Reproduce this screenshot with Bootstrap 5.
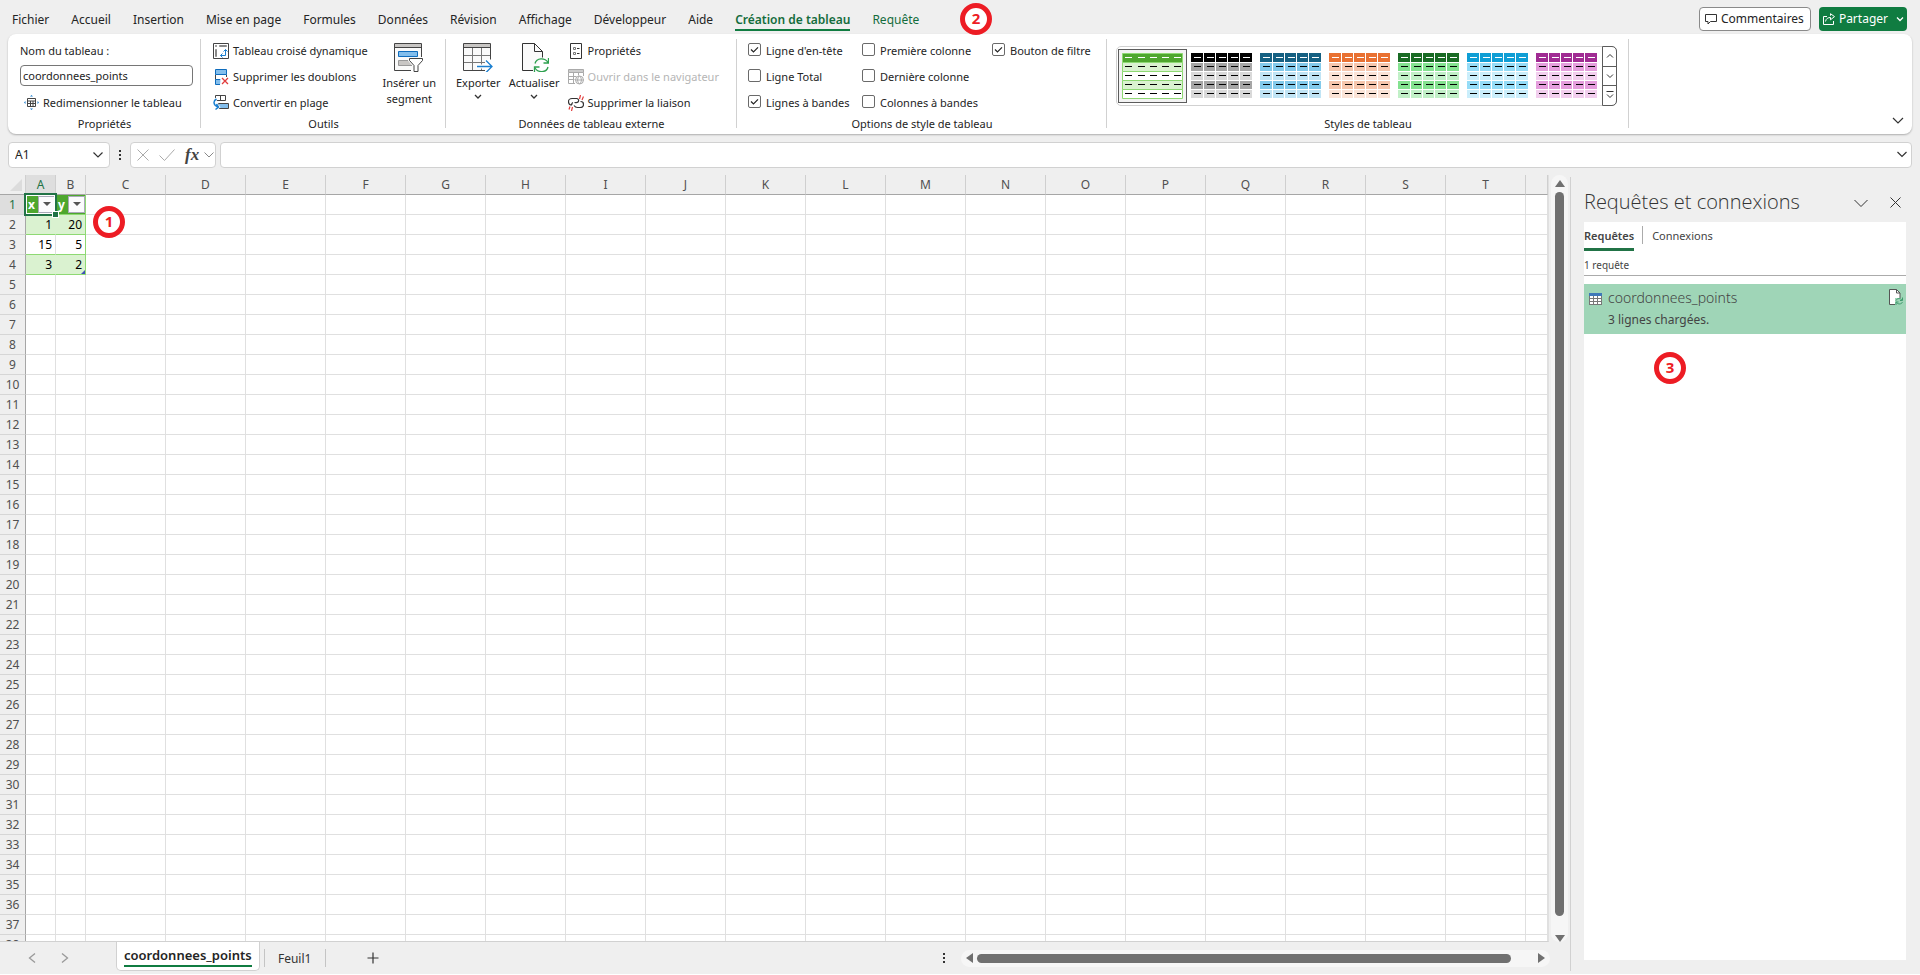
<!DOCTYPE html>
<html lang="fr">
<head>
<meta charset="utf-8">
<meta name="viewport" content="width=device-width, initial-scale=1">
<title>coordonnees_points - Excel</title>
<link href="https://cdn.jsdelivr.net/npm/bootstrap@5.3.0/dist/css/bootstrap.min.css" rel="stylesheet">
<style>
  :root { --xl-green: #107c41; --xl-dark: #217346; --xl-line: #d1d1d1; --xl-chrome: #efefef; }
  body { background: var(--xl-chrome); color: #242424; font: 12px/16px "Noto Sans", "Open Sans", sans-serif; }
  button, input { font: inherit; color: inherit; }
  button { background: none; border: 0; padding: 0; }
  svg { display: block; flex: none; }
  .app { border-bottom: 1px solid #fff; }

  /* ribbon tabs */
  .tabs-bar { height: 34px; padding: 7px 13px 0 12px; }
  .tabs-list { gap: 22px; line-height: 26px; }
  .tabs-list a { color: #242424; text-decoration: none; white-space: nowrap; }
  .tabs-list a.ctx { color: #146c3c; }
  .tabs-list a.current { font-weight: 600; border-bottom: 2px solid var(--xl-green); height: 24px; }
  .btn-top { height: 24px; border-radius: 4px; padding: 0 6px 0 5px; gap: 4px; white-space: nowrap; }
  .btn-comments { background: #fff; border: 1px solid #8a8a8a; }
  .btn-share { background: var(--xl-green); color: #fff; padding: 0 3px 0 4px; }

  /* ribbon */
  .ribbon { height: 100px; margin: 0 8px; background: #fff; border-radius: 8px; box-shadow: 0 1px 2px rgba(0,0,0,.28); font-size: 11px; }
  .rgroup { padding: 4px 0 2px; position: relative; }
  .rgroup::after { content: ""; position: absolute; right: 0; top: 5px; bottom: 6px; border-right: 1px solid var(--xl-line); }
  .rgroup-body { height: 78px; }
  .rgroup-name { height: 16px; text-align: center; }
  .stack3 { display: grid; grid-template-rows: repeat(3, 26px); align-items: center; justify-items: start; align-content: start; }
  .cmd { display: flex; align-items: center; gap: 4px; white-space: nowrap; height: 24px; }
  .cmd:disabled { color: #b5b5b5; }
  .cmd-big { display: flex; flex-direction: column; align-items: center; padding-top: 4px; gap: 3px; }
  .g-prop { width: 193px; }
  .g-tools { width: 245px; }
  .g-data { width: 291px; }
  .g-opts { width: 370px; }
  .g-styles { width: 522px; }
  .g-prop .rgroup-body { padding-left: 12px; }
  .g-tools .rgroup-body { padding: 0 10px 0 12px; }
  .g-data .rgroup-body { padding-left: 10px; }
  .g-opts .rgroup-body { padding-left: 11px; grid-template-columns: 114px 130px auto; }
  .g-styles .rgroup-body { padding: 8px 0 0 9px; }
  .name-input { width: 173px; height: 21px; border: 1px solid #767676; border-radius: 4px; padding: 0 2px; margin-bottom: 2px; }
  .chk { display: flex; align-items: center; gap: 5px; white-space: nowrap; }
  .chk .form-check-input { width: 13px; height: 13px; margin: -2px 0 0; border: 1px solid #6a6a6a; border-radius: 2px; background-color: #fff; box-shadow: none; }
  .chk .form-check-input:checked { background-size: 11px; background-image: url("data:image/svg+xml,%3csvg xmlns='http://www.w3.org/2000/svg' viewBox='0 0 11 11'%3e%3cpath d='M2 5.5l2.5 2.5L9 3.3' fill='none' stroke='%23242424' stroke-width='1.2'/%3e%3c/svg%3e"); }
  .gallery { height: 60px; width: 501px; border: 1px solid var(--xl-line); border-radius: 5px; padding-left: 1px; }
  .swatch { width: 69px; height: 54px; padding: 3px; margin-top: 2px; border: 1px solid transparent; }
  .swatch.picked { border-color: #5c5c5c; background: #f3f3f3; }
  .spin { width: 15px; height: 60px; margin: -1px -1px 0 0; display: grid; grid-template-rows: 1fr 1fr 1fr; border: 1px solid #5c5c5c; border-radius: 0 5px 5px 0; }
  .spin button { display: grid; place-items: center; }
  .spin button + button { border-top: 1px solid #5c5c5c; }

  /* formula bar */
  .fbar { margin: 8px 8px 7px; height: 26px; }
  .fbox { background: #fff; border: 1px solid var(--xl-line); border-radius: 4px; height: 26px; }
  .fbox input { border: 0; background: none; outline: 0; min-width: 0; }
  .namebox { width: 102px; padding: 0 5px 0 6px; }
  .fbtns { width: 86px; padding: 0 1px 0 6px; gap: 10px; }
  .fx { font: italic 600 17px/22px "Liberation Serif", serif; color: #444; }

  /* sheet */
  .sheet-wrap { border-right: 1px solid #e0e0e0; border-bottom: 1px solid var(--xl-line); background: #fff; min-width: 0; }
  .sheet { table-layout: fixed; width: 100%; border-collapse: separate; border-spacing: 0; }
  .sheet th, .sheet td { height: 20px; padding: 1px 0 0; line-height: 18px; overflow: hidden; }
  .sheet th { background: var(--xl-chrome); color: #505050; font-weight: 400; text-align: center; }
  .sheet thead th { border-bottom: 1px solid #a6a6a6; border-right: 1px solid #cfcfcf; }
  .sheet tbody th { border-right: 1px solid #a6a6a6; border-bottom: 1px solid #d6d6d6; }
  .sheet td { border-right: 1px solid #e0e0e0; border-bottom: 1px solid #e0e0e0; text-align: right; color: #000; padding-right: 3px; }
  .sheet th.on { background: #dedede; color: #217346; }
  .sheet td.head { background: #4ea72e; color: #fff; font-weight: 700; padding: 0; border-color: #8ed973; }
  .sheet td.head span { padding: 1px 0 0 2px; }
  .sheet td.band { background: #daf2d0; border-color: #8ed973; border-right-color: #daf2d0; }
  .sheet td.plain { border-bottom-color: #8ed973; }
  .sheet td.edge { border-right-color: #8ed973; }
  .sheet td.active { overflow: visible; position: relative; }
  .sheet td.active::before { content: ""; position: absolute; inset: -2px; border: 2px solid var(--xl-dark); outline: 1px solid #fff; outline-offset: -3px; }
  .sheet td.active::after { content: ""; position: absolute; right: -3px; bottom: -3px; width: 5px; height: 5px; background: var(--xl-dark); outline: 1px solid #fff; }
  .sheet td.last { position: relative; }
  .sheet td.last::after { content: ""; position: absolute; right: 0; bottom: 0; border: 2px solid #3f51b5; border-top-color: transparent; border-left-color: transparent; }
  .filter-btn { width: 17px; height: 17px; margin-top: 1px; background: #fbfbfd; border: 1px solid #a9a9b8; display: grid; place-items: center; }
  .corner { display: flex; justify-content: flex-end; padding: 3px 3px 2px 0; }

  .vbar { width: 17px; margin: 0 2px; background: #f6f6f6; border-radius: 9px; padding: 5px 0 0; }
  .vthumb { width: 9px; border-radius: 5px; background: #707070; margin: 5px 0 19px; }
  .hbar { width: 589px; height: 17px; background: #f6f6f6; border-radius: 9px; padding: 0 5px; }
  .hthumb { height: 9px; border-radius: 5px; background: #707070; margin: 0 27px 0 4px; }

  /* sheet tabs */
  .sheets-bar { height: 32px; padding-right: 20px; }
  .sheet-nav { width: 116px; padding-left: 28px; gap: 25px; }
  .sheet-tab { height: 30px; padding: 4px 7px 0; background: #fff; border: 1px solid var(--xl-line); border-top: 0; border-radius: 0 0 5px 5px; margin-top: -1px; }
  .sheet-tab a { border-bottom: 2px solid var(--xl-green); font-size: 13px; line-height: 20px; color: #242424; font-weight: 600; text-decoration: none; display: block; }
  .sheet-tab2 { border-left: 1px solid #c4c4c4; border-right: 1px solid #c4c4c4; margin: 7px 0 0 4px; width: 62px; height: 18px; line-height: 20px; text-align: center; color: #333; text-decoration: none; }
  .sheet-add { margin-left: 41px; }

  /* queries pane */
  .qpane { width: 350px; margin: 2px 0 3px; border-left: 1px solid var(--xl-line); padding: 0 14px 11px 13px; }
  .qtitle { font: 300 20px/28px "Open Sans", "Noto Sans", sans-serif; height: 45px; padding-top: 11px; color: #333; }
  .qtools { gap: 22px; padding: 0 5px 4px 0; }
  .qtabs { height: 29px; padding-top: 4px; }
  .qtabs a { color: #444; text-decoration: none; line-height: 20px; font-size: 11px; }
  .qtabs a.current { font-weight: 600; border-bottom: 3px solid var(--xl-dark); height: 25px; }
  .qsep { border-left: 1px solid #ababab; height: 18px; margin: 0 9px 0 8px; }
  .qcount { font-size: 10px; line-height: 20px; height: 25px; padding-top: 4px; border-bottom: 1px solid #ababab; color: #444; }
  .qitem { background: #9fd5b7; height: 50px; margin-top: 8px; padding: 5px 3px 0 5px; gap: 6px; color: #444; }
  .qname { font-size: 14px; line-height: 18px; font-weight: 300; }
  .qinfo { line-height: 26px; }

  /* numbered callouts drawn over the window */
  .callout-no { position: absolute; width: 32px; height: 32px; border: 5px solid #ed1c24; border-radius: 50%; background: #fff; color: #ed1c24; font-weight: 700; font-size: 15px; line-height: 21px; text-align: center; z-index: 3; }
  .no-1 { left: 93px; top: 31px; }
  .no-2 { left: 50%; top: 3px; }
  .no-3 { left: 70px; top: 130px; }
</style>
</head>
<body>
<div class="app vh-100 d-flex flex-column overflow-hidden">

  <header class="tabs-bar d-flex justify-content-between position-relative">
    <nav class="tabs-list d-flex" aria-label="Onglets du ruban">
      <a href="#">Fichier</a><a href="#">Accueil</a><a href="#">Insertion</a><a href="#">Mise en page</a><a href="#">Formules</a><a href="#">Données</a><a href="#">Révision</a><a href="#">Affichage</a><a href="#">Développeur</a><a href="#">Aide</a><a href="#" class="ctx current">Création de tableau</a><a href="#" class="ctx">Requête</a>
    </nav>
    <span class="callout-no no-2">2</span>
    <div class="d-flex gap-2">
      <button class="btn-top btn-comments d-flex align-items-center"><svg width="12" height="12" viewBox="0 0 12 12" fill="none" stroke="#333"><path d="M.5 1.500h11v7H5.500L3 11V8.500H.5z"/></svg>Commentaires</button>
      <button class="btn-top btn-share d-flex align-items-center"><svg width="12" height="12" viewBox="0 0 12 12" fill="none" stroke="#fff"><path d="M4 3.500H.5v8h10V8M2.500 8.500C3 5.500 5 4.500 7.500 4.500V6.800L11.500 3.600 7.500.7v2"/></svg>Partager<svg class="ms-1" width="8" height="6" viewBox="0 0 8 6" fill="none" stroke="#fff" stroke-width="1.300"><path d="M1 1.500l3 3 3-3"/></svg></button>
    </div>
  </header>

  <section class="ribbon d-flex flex-shrink-0" aria-label="Création de tableau">
    <div class="rgroup g-prop">
      <div class="rgroup-body stack3">
        <label for="tname">Nom du tableau :</label>
        <input id="tname" class="name-input" value="coordonnees_points">
        <button class="cmd ms-1"><svg width="15" height="15" viewBox="0 0 15 15" fill="none" stroke="#444"><path d="M3.500 3.500h8v8h-8zM3.500 6h8M3.500 8.500h8M6.500 6v5.500M9 6v5.500"/><path d="M6 1.500L7.500 0 9 1.500zM6 13.500L7.500 15 9 13.500zM1.500 6L0 7.500 1.500 9zM13.500 6L15 7.500 13.500 9z" fill="#1b7fd0" stroke="none"/></svg>Redimensionner le tableau</button>
      </div>
      <div class="rgroup-name">Propriétés</div>
    </div>

    <div class="rgroup g-tools">
      <div class="rgroup-body d-flex">
        <div class="stack3 flex-fill">
          <button class="cmd"><svg width="16" height="16" viewBox="0 0 16 16" fill="none" stroke="#444"><path d="M.5.500h15v15H.5z"/><path d="M2.500 2.500h1v1h-1zM6.500 2.500h7v1h-7zM2.500 6.500h1v7h-1z" fill="#c8c6c4" stroke="#888"/><path d="M7.500 12.500h5v-6M9.500 10.500l-2 2 2 2M10.500 8.500l2-2 2 2" stroke="#1b7fd0"/></svg>Tableau croisé dynamique</button>
          <button class="cmd"><svg width="16" height="16" viewBox="0 0 16 16" fill="none"><path d="M2.500 5.500v5h11v-5" fill="#fff" stroke="#444"/><path d="M2.500.500h11v5h-11z" fill="#83beec" stroke="#0f6cbd"/><path d="M8 10.500H2.500v5H7" fill="#83beec" stroke="#0f6cbd"/><path d="M7 8h9v8H8z" fill="#fff"/><path d="M9 9l6 6M15 9l-6 6" stroke="#e03c3c" stroke-width="1.300"/></svg>Supprimer les doublons</button>
          <button class="cmd"><svg width="16" height="16" viewBox="0 0 16 16" fill="none" stroke="#444"><path d="M2.500.500h10v5h-10zM7.500.500v5"/><path d="M5.500 8.500h10v5h-10z" fill="#83beec"/><path d="M3.500 4C0 6 0 10 5 12M2.500 14.500l3-2.500-2-3" stroke="#fff" stroke-width="3"/><path d="M3.500 4C0 6 0 10 5 12M2.500 14.500l3-2.500-2-3" stroke="#1b7fd0" stroke-width="1.500"/></svg>Convertir en plage</button>
        </div>
        <button class="cmd-big align-self-start"><svg width="30" height="30" viewBox="0 0 30 30" fill="none" stroke="#444"><path d="M17 28.500H.5v-27h27V15" fill="#fafafa"/><path d="M1 2h26v3.500H1z" fill="#c8c6c4" stroke="none"/><path d="M.5 5.500h27"/><path d="M4.500 9.500h19v5h-19z" fill="#83beec" stroke="#0f6cbd"/><path d="M14 18.500H4.500v5H18" fill="#c8c6c4" stroke="#999"/><path d="M15.500 16.500h13v2L24 23.500v6h-4v-6l-4.500-5z" fill="#fff"/></svg><span>Insérer un<br>segment</span></button>
      </div>
      <div class="rgroup-name">Outils</div>
    </div>

    <div class="rgroup g-data">
      <div class="rgroup-body d-flex">
        <button class="cmd-big align-self-start"><svg width="30" height="30" viewBox="0 0 30 30" fill="none"><path d="M.5 1.500h27v27H.5z" fill="#fafafa"/><path d="M1 2h26v3H1z" fill="#c8c6c4"/><path d="M.5 13.500h27M.5 20.500h27M9.500 5.500v23M18.500 5.500v23" stroke="#777"/><path d="M.5 5.500h27M.5 1.500h27v27H.5z" stroke="#444"/><path d="M13 22.500h9v-5h8v13h-8v-4h-9z" fill="#fff"/><path d="M14 24.500h15M23 18.500l6 6-6 6" stroke="#1b7fd0" stroke-width="1.300"/></svg><span>Exporter</span><svg width="8" height="6" viewBox="0 0 8 6" fill="none" stroke="#333" stroke-width="1.300"><path d="M1 1l3 3 3-3"/></svg></button>
        <button class="cmd-big align-self-start ms-2"><svg width="30" height="30" viewBox="0 0 30 30" fill="none" stroke="#333"><path d="M14 28.500H3.500v-27h12l8 8v6" fill="#fafafa"/><path d="M15.500 1.500v8h8"/><path d="M16 21.500c1.500-6 10-6 13-1M29.500 16v5h-5M29 25c-1.500 6-10 6-13 1M15.500 30v-5h5" stroke="#2ea04f" stroke-width="1.300"/></svg><span>Actualiser</span><svg width="8" height="6" viewBox="0 0 8 6" fill="none" stroke="#333" stroke-width="1.300"><path d="M1 1l3 3 3-3"/></svg></button>
        <div class="stack3 ms-2">
          <button class="cmd"><svg width="16" height="16" viewBox="0 0 16 16" fill="none" stroke="#333"><path d="M2.500.500h11v15h-11z"/><path d="M5.500 4.500h2v2h-2zM5.500 9.500h2v2h-2z" stroke="#777"/><path d="M9 5.500h2.500M9 10.500h2.500"/></svg>Propriétés</button>
          <button class="cmd" disabled><svg width="16" height="16" viewBox="0 0 16 16" fill="none" stroke="#aaa"><path d="M.5.500h15v3H.5z" fill="#ccc"/><path d="M7 14.500H.5V3.500M15.500 3.500V7M.5 7.500h8M.5 10.500h6M5.500 3.500v11M10.500 3.500v3"/><circle cx="11.500" cy="11" r="4"/><path d="M7.500 11h8M11.500 7c-2.500 2-2.500 6 0 8 2.500-2 2.500-6 0-8"/></svg>Ouvrir dans le navigateur</button>
          <button class="cmd"><svg width="16" height="16" viewBox="0 0 16 16" fill="none" stroke="#333" stroke-width="1.200"><path d="M4 10C1 10 .5 8 .5 6.500S2 3.500 4 3.500h5M6 10.500c1 1.500 2 2 3.500 2H12c2 0 3.500-1.200 3.500-3 0-1.500-.5-3-3-3M9 3.500c2 .5 2 2.500 1 3.500s-2 .5-3.500.5M4 10c-.5-1 0-2 1-2.500"/><path d="M11.500 4l1-4M14 5l1.500-3.500M4.500 12l-1 4M2 11.500L1 14.500" stroke="#e03c3c"/></svg>Supprimer la liaison</button>
        </div>
      </div>
      <div class="rgroup-name">Données de tableau externe</div>
    </div>

    <div class="rgroup g-opts">
      <div class="rgroup-body stack3">
        <label class="chk"><input type="checkbox" class="form-check-input" checked>Ligne d'en-tête</label>
        <label class="chk"><input type="checkbox" class="form-check-input">Première colonne</label>
        <label class="chk"><input type="checkbox" class="form-check-input" checked>Bouton de filtre</label>
        <label class="chk"><input type="checkbox" class="form-check-input">Ligne Total</label>
        <label class="chk"><input type="checkbox" class="form-check-input">Dernière colonne</label>
        <span></span>
        <label class="chk"><input type="checkbox" class="form-check-input" checked>Lignes à bandes</label>
        <label class="chk"><input type="checkbox" class="form-check-input">Colonnes à bandes</label>
      </div>
      <div class="rgroup-name">Options de style de tableau</div>
    </div>

    <div class="rgroup g-styles">
      <div class="rgroup-body">
        <div class="gallery d-flex justify-content-between">
          <div id="swatches" class="d-flex"></div>
          <div class="spin">
            <button aria-label="Monter"><svg width="8" height="6" viewBox="0 0 8 6" fill="none" stroke="#333"><path d="M1 4.500l3-3 3 3"/></svg></button>
            <button aria-label="Descendre"><svg width="8" height="6" viewBox="0 0 8 6" fill="none" stroke="#333"><path d="M1 1.500l3 3 3-3"/></svg></button>
            <button aria-label="Autres styles"><svg width="8" height="8" viewBox="0 0 8 8" fill="none" stroke="#333"><path d="M.5.500h7M1 3.500l3 3 3-3"/></svg></button>
          </div>
        </div>
      </div>
      <div class="rgroup-name">Styles de tableau</div>
    </div>
    <button class="ms-auto align-self-end me-2 mb-2" aria-label="Réduire le ruban"><svg width="12" height="12" viewBox="0 0 12 12" fill="none" stroke="#333" stroke-width="1.200"><path d="M1 4l5 5 5-5"/></svg></button>
  </section>

  <div class="fbar d-flex flex-shrink-0">
    <div class="fbox namebox d-flex align-items-center"><input class="flex-fill p-0" value="A1" aria-label="Zone Nom"><button aria-label="Noms"><svg width="12" height="8" viewBox="0 0 12 8" fill="none" stroke="#333" stroke-width="1.200"><path d="M1.500 1.500l4.500 4.500 4.500-4.500"/></svg></button></div>
    <svg class="align-self-center mx-2" width="4" height="12" viewBox="0 0 4 12" fill="#333"><path d="M1 1h2v2H1zM1 5h2v2H1zM1 9h2v2H1z"/></svg>
    <div class="fbox fbtns d-flex align-items-center">
      <button aria-label="Annuler"><svg width="12" height="12" viewBox="0 0 12 12" fill="none" stroke="#aaa"><path d="M.5.500l11 11M11.500.500L.5 11.500"/></svg></button>
      <button aria-label="Entrer"><svg width="16" height="12" viewBox="0 0 16 12" fill="none" stroke="#aaa"><path d="M.5 6.500l5 5L15.500.500"/></svg></button>
      <div class="d-flex align-items-center flex-fill justify-content-between">
        <button class="fx" aria-label="Insérer une fonction">fx</button>
        <svg width="10" height="8" viewBox="0 0 10 8" fill="none" stroke="#888"><path d="M.5 1.500l4.500 4.500 4.500-4.500"/></svg>
      </div>
    </div>
    <div class="fbox flex-fill d-flex ms-1 pe-1"><input class="flex-fill" aria-label="Barre de formule"><button class="align-self-start mt-2" aria-label="Développer"><svg width="10" height="8" viewBox="0 0 10 8" fill="none" stroke="#333" stroke-width="1.200"><path d="M.5 1l4.500 4.500L9.500 1"/></svg></button></div>
  </div>

  <main class="d-flex flex-fill overflow-hidden">
    <div class="d-flex flex-column flex-fill overflow-hidden">
      <div class="d-flex flex-fill overflow-hidden">
        <div class="sheet-wrap flex-fill overflow-hidden position-relative">
          <table class="sheet" id="sheet"></table>
          <span class="callout-no no-1">1</span>
        </div>
        <div class="vbar d-flex flex-column align-items-center flex-shrink-0">
          <svg width="10" height="7" viewBox="0 0 10 7" fill="#707070"><path d="M5 0l5 7H0z"/></svg>
          <div class="vthumb flex-fill"></div>
          <svg width="10" height="7" viewBox="0 0 10 7" fill="#707070"><path d="M5 7L0 0h10z"/></svg>
        </div>
      </div>
      <footer class="sheets-bar d-flex flex-shrink-0">
        <div class="sheet-nav d-flex align-items-center">
          <button aria-label="Feuille précédente"><svg width="8" height="10" viewBox="0 0 8 10" fill="none" stroke="#999" stroke-width="1.300"><path d="M7 .5L1.500 5 7 9.500"/></svg></button>
          <button aria-label="Feuille suivante"><svg width="8" height="10" viewBox="0 0 8 10" fill="none" stroke="#999" stroke-width="1.300"><path d="M1 .5L6.500 5 1 9.500"/></svg></button>
        </div>
        <div class="sheet-tab"><a href="#">coordonnees_points</a></div>
        <a href="#" class="sheet-tab2">Feuil1</a>
        <button class="sheet-add" aria-label="Nouvelle feuille"><svg width="12" height="12" viewBox="0 0 12 12" fill="none" stroke="#333" stroke-width="1.200"><path d="M6 .5v11M.5 6h11"/></svg></button>
        <svg class="ms-auto me-3 align-self-center" width="3" height="12" viewBox="0 0 3 12" fill="#333"><path d="M1 1h2v2H1zM1 5h2v2H1zM1 9h2v2H1z"/></svg>
        <div class="hbar d-flex align-items-center align-self-center">
          <svg width="7" height="10" viewBox="0 0 7 10" fill="#707070"><path d="M0 5l7-5v10z"/></svg>
          <div class="hthumb flex-fill"></div>
          <svg width="7" height="10" viewBox="0 0 7 10" fill="#707070"><path d="M7 5L0 0v10z"/></svg>
        </div>
      </footer>
    </div>

    <aside class="qpane d-flex flex-column flex-shrink-0">
      <div class="qtitle d-flex justify-content-between">
        <span>Requêtes et connexions</span>
        <span class="qtools d-flex align-items-center">
          <button aria-label="Options du volet"><svg width="14" height="10" viewBox="0 0 14 10" fill="none" stroke="#333"><path d="M.5 2L7 8.500 13.500 2"/></svg></button>
          <button aria-label="Fermer"><svg width="11" height="11" viewBox="0 0 11 11" fill="none" stroke="#333"><path d="M.5.500l10 10M10.500.500l-10 10"/></svg></button>
        </span>
      </div>
      <div class="bg-white flex-fill position-relative">
        <nav class="qtabs d-flex" aria-label="Volet">
          <a href="#" class="current">Requêtes</a><span class="qsep"></span><a href="#">Connexions</a>
        </nav>
        <div class="qcount">1 requête</div>
        <div class="qitem d-flex align-items-start">
          <svg class="mt-1" width="13" height="12" viewBox="0 0 13 12"><path d="M0 0h13v12H0z" fill="#777"/><path d="M0 0h13v3H0z" fill="#3f78b8"/><path d="M1 3h3v2H1zM5 3h3v2H5zM9 3h3v2H9zM1 6h3v2H1zM5 6h3v2H5zM9 6h3v2H9zM1 9h3v2H1zM5 9h3v2H5zM9 9h3v2H9z" fill="#fff"/></svg>
          <div class="flex-fill"><div class="qname">coordonnees_points</div><div class="qinfo">3 lignes chargées.</div></div>
          <svg width="15" height="16" viewBox="0 0 15 16" fill="none"><path d="M7 15.500H1.500V.5h7l3.500 3.500v5" fill="#fff" stroke="#555"/><path d="M8.500.500V4H12" stroke="#555"/><path d="M7 9h8v7H7z" fill="#9fd5b7"/><path d="M8 11.500c1-2.500 4.500-2.500 6-.5M14.500 8.500V11.500H12M14.500 13c-1 2.500-4.500 2.500-6 .500M8 16v-3h2.500" stroke="#3f9a6c"/></svg>
        </div>
        <span class="callout-no no-3">3</span>
      </div>
    </aside>
  </main>
</div>

<script src="https://cdn.jsdelivr.net/npm/bootstrap@5.3.0/dist/js/bootstrap.bundle.min.js"></script>
<script>
  // Table style gallery: [header, odd band, even band]
  const styles = [
    ['#4ea72e', '#daf2d0', '#fff'], ['#000', '#a6a6a6', '#d9d9d9'], ['#156082', '#83caeb', '#c0e4f5'],
    ['#e97132', '#f6c6ad', '#fbe3d6'], ['#196b24', '#84e290', '#c1f0c7'], ['#0f9ed5', '#95dcf7', '#caeefb'],
    ['#a02b93', '#e59edd', '#f2ceee']];
  const xs = [0, 13, 25, 37, 49], ws = [12, 11, 11, 11, 12];
  document.getElementById('swatches').innerHTML = styles.map((c, n) => {
    let s = '';
    for (let r = 0; r < 5; r++) {
      const fill = r === 0 ? c[0] : c[r % 2 ? 1 : 2], y = r * 9 + (r ? 1 : 0);
      if (n === 0) s += `<path d="M.5 ${r * 9 + .5}h60v9H.5z" fill="${fill}" stroke="#8ed973"/>`;
      xs.forEach((x, i) => {
        if (n) s += `<path d="M${x} ${y}h${ws[i]}v${r ? 8 : 9}h-${ws[i]}z" fill="${fill}"/>`;
        s += `<path d="M${x + 3} ${r * 9 + 4}h7v1h-7z" fill="${r ? '#000' : '#fff'}"/>`;
      });
    }
    return `<button class="swatch${n ? '' : ' picked'}" aria-label="Style ${n + 1}"><svg width="61" height="46" viewBox="0 0 61 46">${s}</svg></button>`;
  }).join('');

  // Worksheet
  const cols = 'ABCDEFGHIJKLMNOPQRST'.split('');
  const data = { 2: [1, 20], 3: [15, 5], 4: [3, 2] };
  const arrow = '<button class="filter-btn" aria-label="Filtrer"><svg width="8" height="4" viewBox="0 0 8 4" fill="#555"><path d="M0 0h8L4 4z"/></svg></button>';
  const head = t => `<div class="d-flex justify-content-between"><span>${t}</span>${arrow}</div>`;
  let h = '<colgroup><col style="width:26px">' + cols.map((c, i) => `<col style="width:${i < 2 ? 30 : 80}px">`).join('') + '<col></colgroup>';
  h += '<thead><tr><th><span class="corner"><svg width="12" height="12" viewBox="0 0 12 12" fill="#dcdcdc"><path d="M12 0v12H0z"/></svg></span></th>' +
       cols.map((c, i) => `<th${i ? '' : ' class="on"'}>${c}</th>`).join('') + '<th></th></tr></thead><tbody>';
  for (let r = 1; r <= 38; r++) {
    h += `<tr><th${r === 1 ? ' class="on"' : ''}>${r}</th>`;
    for (let c = 0; c <= cols.length; c++) {
      if (r === 1 && c < 2) h += `<td class="head ${c ? 'edge' : 'active'}">${head('xy'[c])}</td>`;
      else if (data[r] && c < 2) h += `<td class="${r % 2 ? 'plain' : 'band'}${c ? ' edge' : ''}${r === 4 && c ? ' last' : ''}">${data[r][c]}</td>`;
      else h += '<td></td>';
    }
    h += '</tr>';
  }
  document.getElementById('sheet').innerHTML = h + '</tbody>';
</script>
</body>
</html>
